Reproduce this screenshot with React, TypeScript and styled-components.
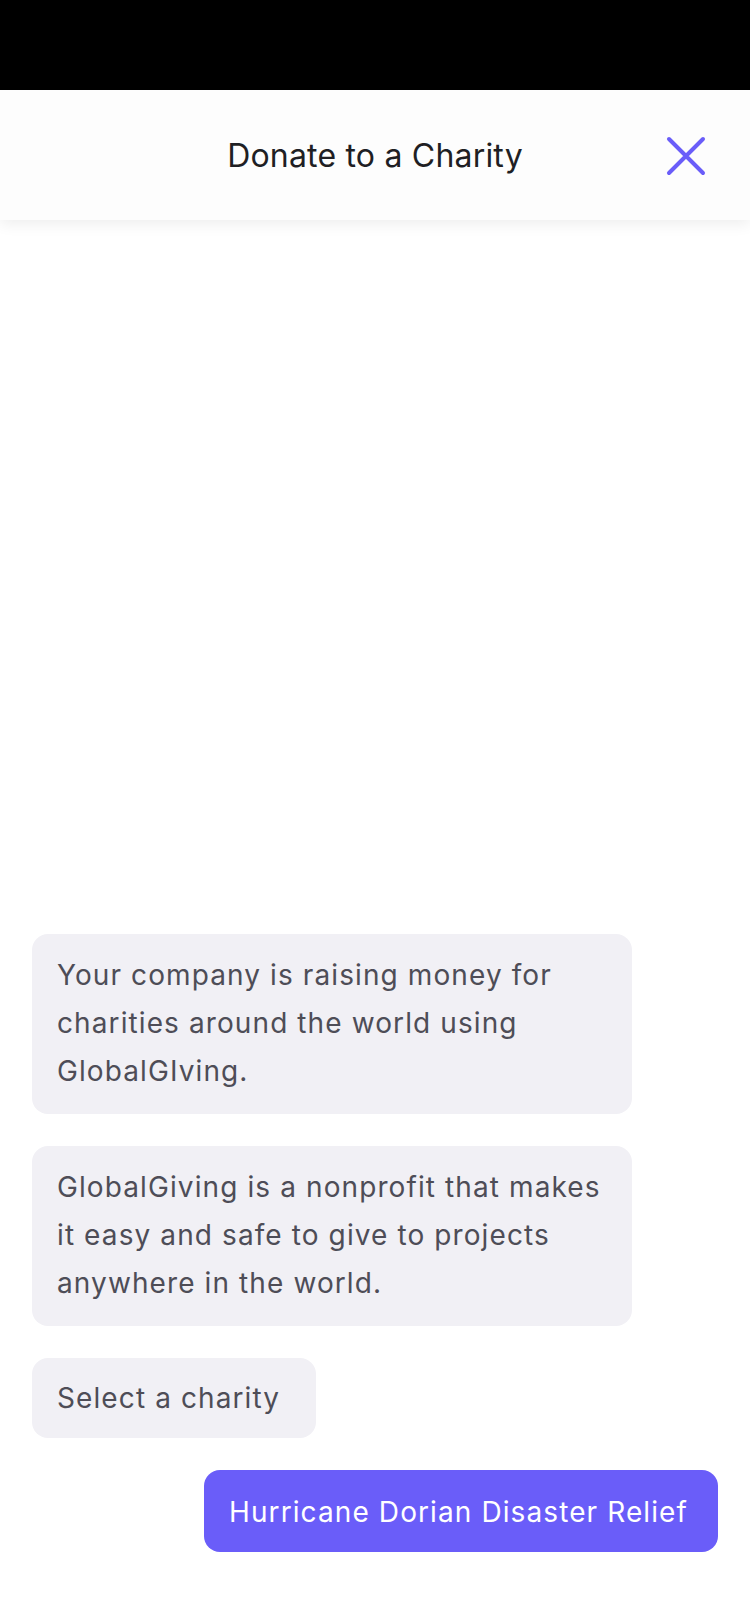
import React from "react";
import styled, { createGlobalStyle } from "styled-components";

const GlobalStyle = createGlobalStyle`
  html, body {
    margin: 0;
    padding: 0;
    background: #ffffff;
  }
  body {
    font-family: Inter, "Noto Sans", sans-serif;
    -webkit-font-smoothing: antialiased;
  }
  * { box-sizing: border-box; }
`;

const Screen = styled.div`
  width: 750px;
  height: 1624px;
  display: flex;
  flex-direction: column;
  background: #ffffff;
  overflow: hidden;
`;

const StatusBar = styled.div`
  height: 90px;
  flex-shrink: 0;
  background: #000000;
`;

const Header = styled.header`
  height: 130px;
  flex-shrink: 0;
  display: flex;
  align-items: center;
  justify-content: center;
  position: relative;
  background: #fdfdfd;
  box-shadow: 0 4px 14px rgba(0, 0, 0, 0.07);
  z-index: 1;
`;

const Title = styled.h1`
  margin: 0;
  font-family: Inter, sans-serif;
  font-weight: 400;
  font-size: 32px;
  color: #1f1f24;
  letter-spacing: 0.2px;
`;

const CloseButton = styled.button`
  position: absolute;
  right: 44px;
  top: 46px;
  width: 40px;
  height: 40px;
  padding: 0;
  border: none;
  background: transparent;
  display: flex;
  align-items: center;
  justify-content: center;
`;

const Chat = styled.main`
  flex: 1;
  display: flex;
  flex-direction: column;
  justify-content: flex-end;
  gap: 32px;
  padding: 0 32px 72px;
`;

const Bubble = styled.div<{ $wide?: boolean }>`
  align-self: flex-start;
  width: ${(p) => (p.$wide ? "600px" : "auto")};
  padding: ${(p) => (p.$wide ? "17px 22px 19px 25px" : "16px 36px 16px 25px")};
  background: #f1f0f5;
  border-radius: 16px;
  font-size: 28px;
  line-height: 48px;
  letter-spacing: 1.1px;
  color: #4e4d57;
`;

const Reply = styled.div`
  align-self: flex-end;
  padding: 18px 30px 16px 25px;
  background: #6a5df9;
  border-radius: 16px;
  font-size: 28px;
  line-height: 48px;
  letter-spacing: 1.1px;
  color: #ffffff;
`;

const CloseIcon = () => (
  <svg width="40" height="40" viewBox="0 0 40 40">
    <path
      d="M3 3 L37 37 M37 3 L3 37"
      stroke="#6a5df9"
      strokeWidth="4"
      strokeLinecap="round"
      fill="none"
    />
  </svg>
);

export default function App() {
  return (
    <>
      <GlobalStyle />
      <Screen>
        <StatusBar />
        <Header>
          <Title>Donate to a Charity</Title>
          <CloseButton aria-label="Close">
            <CloseIcon />
          </CloseButton>
        </Header>
        <Chat>
          <Bubble $wide>
            Your company is raising money for charities around the world using
            GlobalGIving.
          </Bubble>
          <Bubble $wide>
            GlobalGiving is a nonprofit that makes it easy and safe to give to
            projects anywhere in the world.
          </Bubble>
          <Bubble>Select a charity</Bubble>
          <Reply>Hurricane Dorian Disaster Relief</Reply>
        </Chat>
      </Screen>
    </>
  );
}
